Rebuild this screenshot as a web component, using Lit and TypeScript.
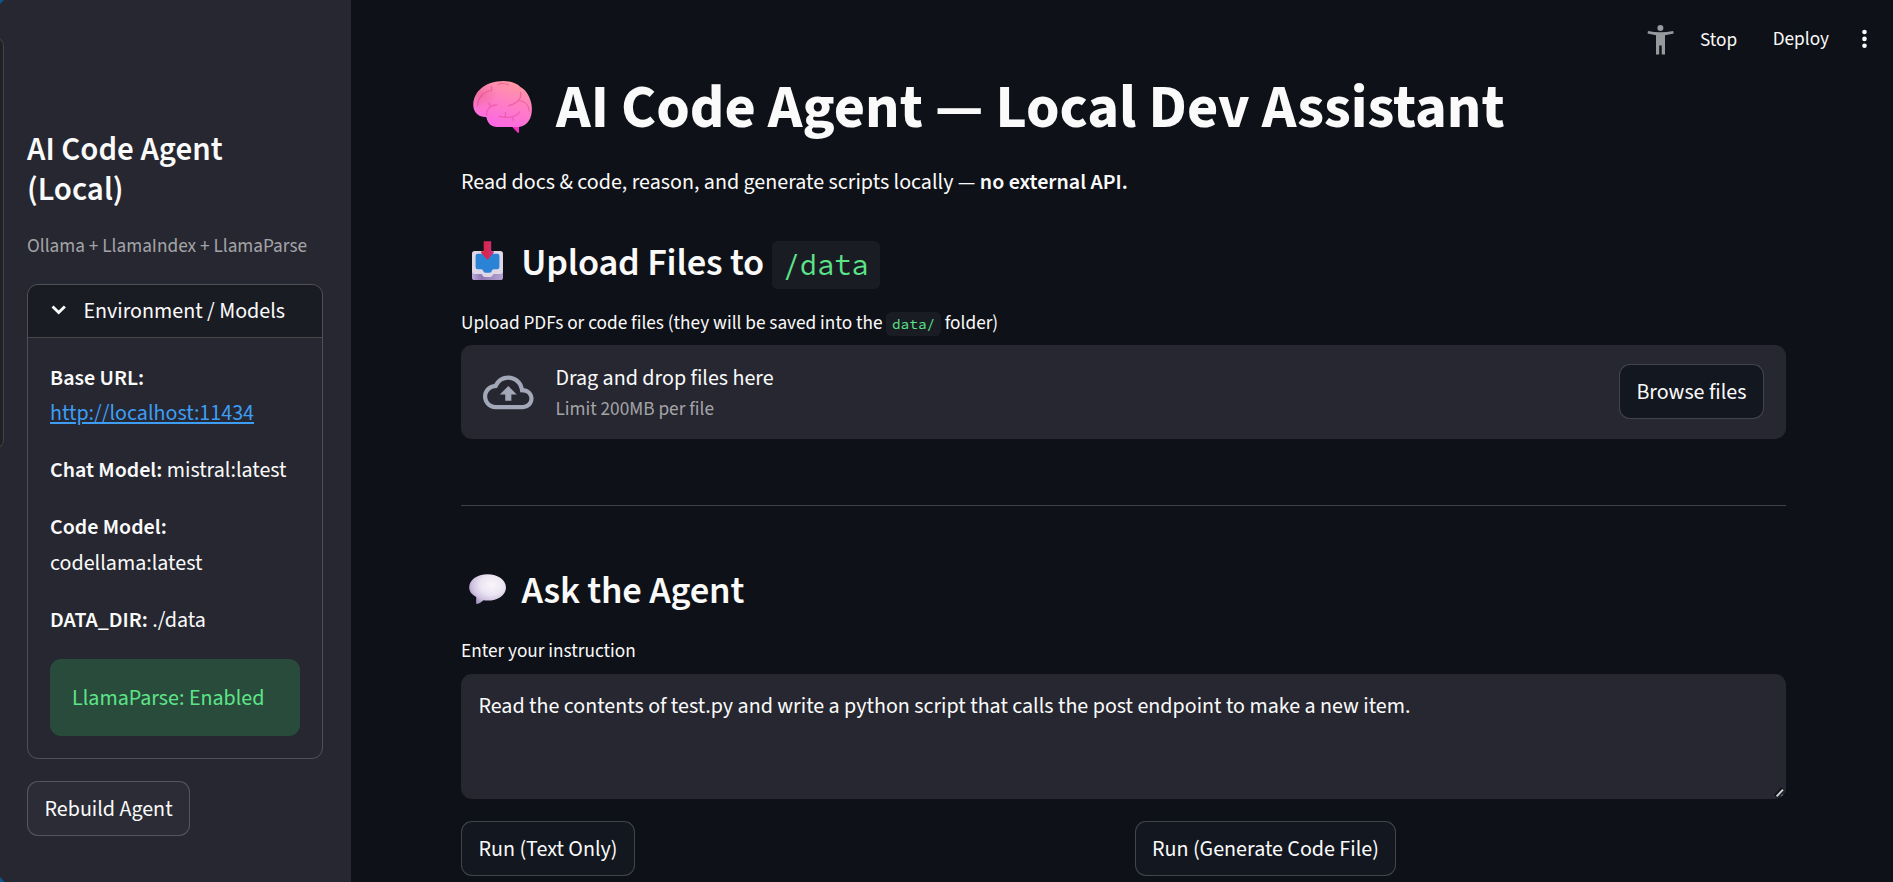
import { LitElement, html, css, svg } from "lit";
import { customElement, property } from "lit/decorators.js";

const brainIcon = svg`
  <defs>
    <linearGradient id="brain-fill" x1="0.72" y1="0" x2="0.35" y2="1">
      <stop offset="0" stop-color="#ff9aa0"></stop>
      <stop offset="0.45" stop-color="#ff7fc2"></stop>
      <stop offset="1" stop-color="#fb66e6"></stop>
    </linearGradient>
    <radialGradient id="brain-shade" cx="0.12" cy="0.3" r="0.3">
      <stop offset="0" stop-color="#e8648c" stop-opacity="0.6"></stop>
      <stop offset="1" stop-color="#e8648c" stop-opacity="0"></stop>
    </radialGradient>
  </defs>
  <path d="M36.5 43 L46 43 V51 Q46 52.6 44.4 51.6 Z" fill="#f32fbd"></path>
  <path d="M24 0.6 C33 -0.9 42 0.6 47.5 6 C54 9.5 57.5 17 58.6 24 C60 35 56 44.5 46 46 H24 C18.5 46 14.5 42.5 13.3 36 C7 36.5 0.6 32.5 0.3 24.5 C0.2 13 9 3 24 0.6 Z" fill="url(#brain-fill)"></path>
  <path d="M24 0.6 C33 -0.9 42 0.6 47.5 6 C54 9.5 57.5 17 58.6 24 C60 35 56 44.5 46 46 H24 C18.5 46 14.5 42.5 13.3 36 C7 36.5 0.6 32.5 0.3 24.5 C0.2 13 9 3 24 0.6 Z" fill="url(#brain-shade)"></path>
  <g fill="none" stroke="#e2478f" stroke-opacity="0.55" stroke-width="1.2" stroke-linecap="round">
    <path d="M4.5 25 C5 16 11 10.5 18.5 9.5 Q19.3 7.5 18.3 5.6"></path>
    <path d="M25 3.8 Q30 1 35.5 4"></path>
    <path d="M13.5 34.5 C13.2 27.5 17.5 24 24 23.8 M17.5 25.5 Q16.3 24 16.2 22"></path>
    <path d="M35.6 24.6 Q44.5 22.6 46.8 17.5 Q48.3 14.5 47.3 11 M46 19.5 C52 20 55.5 24 56.2 30"></path>
    <path d="M26 35.4 C33 37.3 43 36.8 46.5 31 M31.8 36 Q33 33.8 32.3 31.5 M39.5 36 Q40.3 37.5 40 39.5"></path>
  </g>`;

const inboxIcon = svg`
  <defs>
    <linearGradient id="tray-arrow" x1="0" y1="0" x2="1" y2="0">
      <stop offset="0" stop-color="#df2138"></stop>
      <stop offset="1" stop-color="#c7317c"></stop>
    </linearGradient>
    <linearGradient id="tray-base" x1="0" y1="0" x2="1" y2="0">
      <stop offset="0" stop-color="#bda9d6"></stop>
      <stop offset="0.3" stop-color="#8f78b4"></stop>
      <stop offset="0.75" stop-color="#a793c6"></stop>
      <stop offset="1" stop-color="#b6a3cf"></stop>
    </linearGradient>
  </defs>
  <rect x="0" y="24" width="31" height="15" rx="2.6" fill="url(#tray-base)"></rect>
  <path d="M2.6 10 H28.4 Q31 10 31 12.8 V30.6 Q31 33 28.6 33 H21.4 Q20.4 36 18.4 36 H12.6 Q10.6 36 9.8 33 H2.4 Q0 33 0 30.6 V12.8 Q0 10 2.6 10 Z" fill="#ddd7e6"></path>
  <path d="M5.8 12.8 H25.2 Q27.4 12.8 27.4 15 V26 Q27.4 28.2 25.2 28.2 H21.8 Q20.4 28.2 20 29.6 Q19.4 31.8 17.4 31.8 H13.6 Q11.6 31.8 11 29.6 Q10.6 28.2 9.2 28.2 H5.8 Q3.6 28.2 3.6 26 V15 Q3.6 12.8 5.8 12.8 Z" fill="#2b83d6"></path>
  <path d="M11.7 0.2 H19.2 V10.2 H21.3 Q22.4 10.7 21.6 11.8 L16.4 18 Q15.4 19 14.5 18 L9.2 11.8 Q8.5 10.7 9.6 10.2 H11.7 Z" fill="url(#tray-arrow)"></path>`;

const bubbleIcon = svg`
  <defs>
    <radialGradient id="bubble-fill" cx="0.62" cy="0.36" r="0.66">
      <stop offset="0" stop-color="#f8f6fb"></stop>
      <stop offset="0.5" stop-color="#ebe4f2"></stop>
      <stop offset="0.82" stop-color="#cfc2e0"></stop>
      <stop offset="1" stop-color="#ab9cc6"></stop>
    </radialGradient>
  </defs>
  <path d="M18.5 0.2 C29 0.2 37 6 37 13.4 C37 21 29 26.6 18.5 26.6 Q16.4 26.6 14.5 26.2 C12.4 28 10.2 29.6 7.9 30 Q7.2 30 7.2 29 V22.9 C2.8 20.6 0.2 17.4 0.2 13.4 C0.2 6 8 0.2 18.5 0.2 Z" fill="url(#bubble-fill)"></path>`;

@customElement("st-button")
class StButton extends LitElement {
  @property({ type: String }) label = "";
  static styles = css`
    :host { display: inline-flex; }
    .button {
      box-sizing: border-box; height: 55px; padding: 2px 16.5px 0; border-radius: 11px;
      border: 1px solid rgba(250, 250, 250, 0.2); background: var(--button-bg, #131720);
      color: #fafafa; font: inherit; font-size: 22px; line-height: 35.2px; white-space: nowrap;
    }
  `;
  render() {
    return html`<button class="button">${this.label}</button>`;
  }
}

@customElement("agent-sidebar")
class AgentSidebar extends LitElement {
  static styles = css`
    :host { display: flex; flex-direction: column; align-items: flex-start; box-sizing: border-box;
      width: 351px; flex: none; padding: 130.2px 28px 0 27px; background: #262730; position: relative; overflow: hidden; --button-bg: #2b2c36; }
    .title { margin: 0; font-size: 33px; line-height: 39.6px; font-weight: 600; width: 240px; }
    .caption { margin: 21.5px 0 0; font-size: 19.25px; line-height: 30.8px; color: rgba(250, 250, 250, 0.6); white-space: nowrap; }
    .expander { box-sizing: border-box; width: 296px; height: 475.5px; margin: 22.3px 0 21.7px; border: 1px solid rgba(250, 250, 250, 0.2); border-radius: 11px; overflow: hidden; }
    .summary { display: flex; align-items: center; box-sizing: border-box; height: 53px; padding: 2px 0 0 17px; background: #1a1c24; border-bottom: 1px solid rgba(250, 250, 250, 0.2); }
    .chevron { width: 27.4px; height: 27.4px; margin: -5px 11px 0 0; fill: none; stroke: #fafafa; stroke-width: 2.5; }
    .details { display: flex; flex-direction: column; gap: 22px; padding: 22.8px 22px 22px; }
    .item { margin: 0; white-space: nowrap; }
    .bold { font-weight: 600; }
    .link { color: #3d9df3; text-decoration: underline; text-decoration-thickness: 2px; text-underline-offset: 2px; }
    .alert { margin-top: -1.3px; padding: 22px 22px 19.8px; border-radius: 11px; background: #294b3b; color: #5ce488; white-space: nowrap; }
    .ghost { position: absolute; left: -20px; top: 36.5px; width: 22px; height: 410px; border: 1.4px solid #434346; border-radius: 9px; background: #212124; }
    .corner { position: absolute; left: 0; width: 5px; height: 5px; background: #0b568d; }
    .top { top: 0; clip-path: polygon(0 0, 80% 0, 0 80%); }
    .bottom { bottom: 0; clip-path: polygon(0 0, 90% 100%, 0 100%); }
  `;
  render() {
    return html`
      <span class="corner top"></span><span class="corner bottom"></span><span class="ghost"></span>
      <h2 class="title">AI Code Agent (Local)</h2>
      <p class="caption">Ollama + LlamaIndex + LlamaParse</p>
      <section class="expander">
        <div class="summary">
          <svg class="chevron" viewBox="0 0 24 24"><path d="M6.6 9.2 L12 14.5 L17.4 9.2"></path></svg>
          <span>Environment / Models</span>
        </div>
        <div class="details">
          <p class="item"><span class="bold">Base URL:</span><br /><a class="link">http://localhost:11434</a></p>
          <p class="item"><span class="bold">Chat Model:</span> mistral:latest</p>
          <p class="item"><span class="bold">Code Model:</span><br />codellama:latest</p>
          <p class="item"><span class="bold">DATA_DIR:</span> ./data</p>
          <div class="alert">LlamaParse: Enabled</div>
        </div>
      </section>
      <st-button label="Rebuild Agent"></st-button>
    `;
  }
}

@customElement("app-root")
class AppRoot extends LitElement {
  static styles = css`
    :host { display: flex; height: 882px; overflow: hidden; background: #0e1117; color: #fafafa;
      font-family: "Source Sans Pro", "Source Sans 3", "Noto Sans CJK JP", sans-serif; font-size: 22px; line-height: 35.2px; }
    .main { flex: 1; display: flex; flex-direction: column; min-width: 0; }
    .toolbar { display: flex; justify-content: flex-end; height: 72px; box-sizing: border-box; padding: 24px 25px 0 0; font-size: 19.25px; line-height: 30.4px; }
    .person { width: 28px; height: 31px; margin: 1px 25px 0 0; fill: #98999c; }
    .stop { margin-right: 35.6px; padding-top: 0.8px; }
    .deploy { margin-right: 32px; }
    .kebab { width: 7px; height: 22px; margin-top: 4px; fill: #fafafa; }
    .body { padding: 0 107px 0 110px; display: flex; flex-direction: column; }
    .h1 { display: flex; margin: 0; height: 72.4px; padding-left: 12px; font-size: 60.5px; line-height: 72.4px; font-weight: 700; white-space: nowrap; }
    .brain { width: 59px; height: 52.5px; margin: 8.8px 24px 0 0; }
    .lead { margin: 21.1px 0 39.2px; }
    .bold { font-weight: 600; }
    .h2 { display: flex; margin: 0; height: 46.1px; font-size: 38.5px; line-height: 46.1px; font-weight: 600; letter-spacing: -0.005em; white-space: nowrap; }
    .inbox { width: 31px; height: 39px; margin: 1px 18.2px 0 11px; }
    .bubble { width: 37.2px; height: 30px; margin: 6px 15.4px 0 8px; }
    .code { font-family: "Source Code Pro", "Liberation Mono", monospace; font-size: 0.75em; font-weight: 400; line-height: 1; color: #5ce488; background: #1a1c24; padding: 0.2em 0.39em; border-radius: 5.5px; }
    .label { font-size: 19.25px; line-height: 30.7px; height: 30.7px; white-space: nowrap; }
    .upload-label { margin: 22px 0 6.2px; }
    .dropzone { display: flex; align-items: center; box-sizing: border-box; height: 94px; padding: 0 22px; border-radius: 11px; background: #262730; }
    .cloud { width: 50.6px; height: 50.6px; margin-right: 21.8px; fill: #a3a8b8; }
    .hint { flex: 1; display: flex; flex-direction: column; }
    .limit { font-size: 19.25px; line-height: 27px; color: rgba(250, 250, 250, 0.6); }
    .rule { height: 1px; margin: 66px 0 62.3px; background: #3d4044; }
    .ask-label { margin: 21.6px 0 7.6px; }
    .textarea { position: relative; box-sizing: border-box; height: 125px; padding: 17.3px 17.4px; border-radius: 11px; background: #262730; line-height: 30.8px; white-space: nowrap; }
    .grip { position: absolute; right: 1px; bottom: 1px; width: 11px; height: 11px; fill: none; }
    .actions { display: grid; grid-template-columns: 1fr 1fr; gap: 22px; margin-top: 22px; }
  `;
  render() {
    return html`
      <agent-sidebar></agent-sidebar>
      <main class="main">
        <header class="toolbar">
          <svg class="person" viewBox="0 0 28 31">
            <circle cx="13.4" cy="3.1" r="3"></circle>
            <path d="M1 5.9 Q13.4 8.8 26.2 5.9 L26.7 8.6 L18 10.2 V29.4 H14.7 V20.4 H12.2 V29.4 H9 V10.2 L0.5 8.6 Z"></path>
          </svg>
          <span class="stop">Stop</span>
          <span class="deploy">Deploy</span>
          <svg class="kebab" viewBox="0 0 7 22"><circle cx="3.5" cy="4" r="2.3"></circle><circle cx="3.5" cy="10.9" r="2.3"></circle><circle cx="3.5" cy="17.8" r="2.3"></circle></svg>
        </header>
        <div class="body">
          <h1 class="h1"><svg class="brain" viewBox="0 0 59 52.5">${brainIcon}</svg>AI Code Agent — Local Dev Assistant</h1>
          <p class="lead">Read docs &amp; code, reason, and generate scripts locally — <span class="bold">no external API.</span></p>
          <h2 class="h2"><svg class="inbox" viewBox="0 0 31 39">${inboxIcon}</svg><span>Upload Files to <code class="code">/data</code></span></h2>
          <div class="label upload-label">Upload PDFs or code files (they will be saved into the <code class="code">data/</code> folder)</div>
          <div class="dropzone">
            <svg class="cloud" viewBox="0 0 24 24"><path d="M19.35 10.04A7.49 7.49 0 0012 4C9.11 4 6.6 5.64 5.35 8.04A5.994 5.994 0 000 14c0 3.31 2.69 6 6 6h13c2.76 0 5-2.24 5-5 0-2.64-2.05-4.78-4.65-4.96zM19 18H6c-2.21 0-4-1.79-4-4 0-2.05 1.53-3.76 3.56-3.97l1.07-.11.5-.95A5.469 5.469 0 0112 6c2.62 0 4.88 1.86 5.39 4.43l.3 1.5 1.53.11A2.98 2.98 0 0122 15c0 1.65-1.35 3-3 3zM8 13h2.55v3h2.9v-3H16l-4-4-4 4z"></path></svg>
            <div class="hint"><span>Drag and drop files here</span><span class="limit">Limit 200MB per file</span></div>
            <st-button label="Browse files"></st-button>
          </div>
          <div class="rule"></div>
          <h2 class="h2"><svg class="bubble" viewBox="0 0 37.2 30">${bubbleIcon}</svg>Ask the Agent</h2>
          <div class="label ask-label">Enter your instruction</div>
          <div class="textarea">Read the contents of test.py and write a python script that calls the post endpoint to make a new item.
            <svg class="grip" viewBox="0 0 11 11"><path d="M1.6 9.4 L8.8 1.8" stroke="#101217" stroke-width="4.2"></path><path d="M2.6 9.4 L9 2.6" stroke="#d4d4d6" stroke-width="1.9"></path><path d="M7.4 8.8 L8.6 7.6" stroke="#77787d" stroke-width="1.2"></path></svg>
          </div>
          <div class="actions">
            <div><st-button label="Run (Text Only)"></st-button></div>
            <div><st-button label="Run (Generate Code File)"></st-button></div>
          </div>
        </div>
      </main>
    `;
  }
}
